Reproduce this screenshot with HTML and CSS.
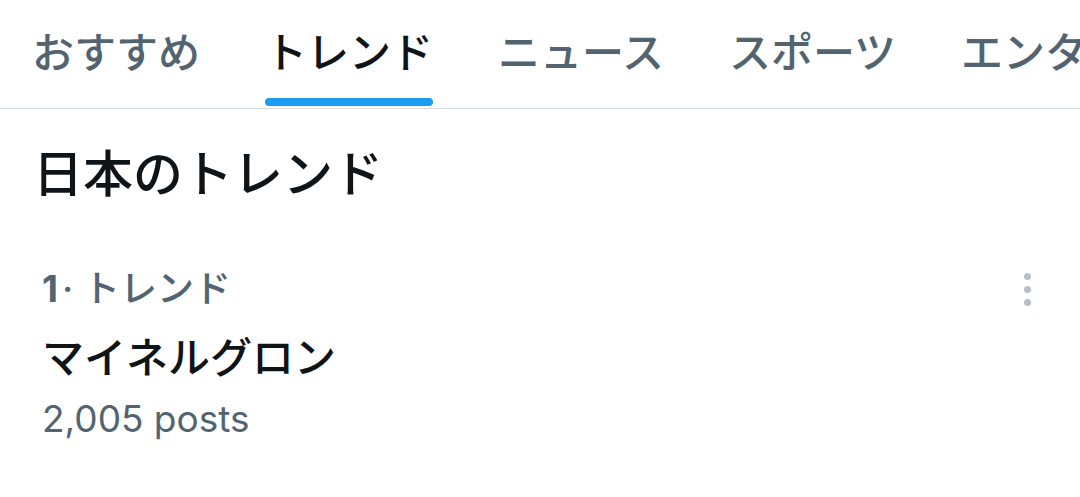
FILE: index.html
```html
<!DOCTYPE html>
<html lang="ja">
<head>
  <meta charset="UTF-8">
  <title>トレンド</title>
  <link rel="stylesheet" href="styles.css">
</head>
<body>
  <nav class="tabs">
    <a class="tab">
      <span class="tab-label">おすすめ</span>
      <span class="tab-indicator"></span>
    </a>
    <a class="tab active">
      <span class="tab-label">トレンド</span>
      <span class="tab-indicator"></span>
    </a>
    <a class="tab">
      <span class="tab-label">ニュース</span>
      <span class="tab-indicator"></span>
    </a>
    <a class="tab">
      <span class="tab-label">スポーツ</span>
      <span class="tab-indicator"></span>
    </a>
    <a class="tab">
      <span class="tab-label">エンタメ</span>
      <span class="tab-indicator"></span>
    </a>
  </nav>

  <section class="trends">
    <h2 class="trends-title">日本のトレンド</h2>

    <div class="trend">
      <div class="trend-body">
        <div class="trend-meta"><span class="trend-rank">1</span>· トレンド</div>
        <div class="trend-name">マイネルグロン</div>
        <div class="trend-count">2,005 posts</div>
      </div>
      <button class="trend-more" aria-label="その他">
        <span class="dot"></span>
        <span class="dot"></span>
        <span class="dot"></span>
      </button>
    </div>
  </section>
</body>
</html>
```

FILE: styles.css
```css
body {
  margin: 0;
  width: 1080px;
  height: 497px;
  overflow: hidden;
  background-color: #ffffff;
  font-family: Inter, "Noto Sans CJK JP", sans-serif;
  color: #0f1419;
}

/* Top tab bar */
.tabs {
  display: flex;
  height: 108px;
  border-bottom: 1px solid #d6dbdf;
  overflow: hidden;
  white-space: nowrap;
}

.tab {
  display: flex;
  flex-direction: column;
  align-items: center;
  flex-shrink: 0;
  padding: 0 33px 0 32px;
  color: #536471;
  font-family: "Noto Sans CJK JP", sans-serif;
  font-size: 42px;
  font-weight: 500;
}

.tab-label {
  flex: 1;
  display: flex;
  align-items: center;
}

.tab-indicator {
  height: 8px;
  width: 100%;
  margin-bottom: 2px;
  border-radius: 4px;
}

.tab.active {
  color: #0f1419;
}

.tab.active .tab-indicator {
  background-color: #1d9bf0;
}

/* Trends list */
.trends-title {
  margin: 30px 0 0;
  padding: 0 33px;
  font-family: "Noto Sans CJK JP", sans-serif;
  font-size: 50px;
  font-weight: 500;
  line-height: 62px;
}

.trend {
  display: flex;
  justify-content: space-between;
  align-items: flex-start;
  margin-top: 66px;
  padding: 0 33px 0 42px;
}

.trend-meta {
  font-size: 37px;
  font-weight: 500;
  line-height: 44px;
  color: #536471;
}

.trend-rank {
  margin-right: 4px;
  font-weight: 700;
}

.trend-name {
  margin-top: 18px;
  font-family: "Noto Sans CJK JP", sans-serif;
  font-size: 42px;
  font-weight: 500;
  line-height: 52px;
}

.trend-count {
  margin-top: 16px;
  font-size: 37px;
  line-height: 44px;
  color: #536471;
}

.trend-more {
  display: flex;
  flex-direction: column;
  align-items: center;
  justify-content: center;
  gap: 6px;
  width: 40px;
  height: 44px;
  padding: 0;
  border: none;
  background: transparent;
}

.dot {
  width: 7px;
  height: 7px;
  border-radius: 50%;
  background-color: #b3c0c9;
}
```
